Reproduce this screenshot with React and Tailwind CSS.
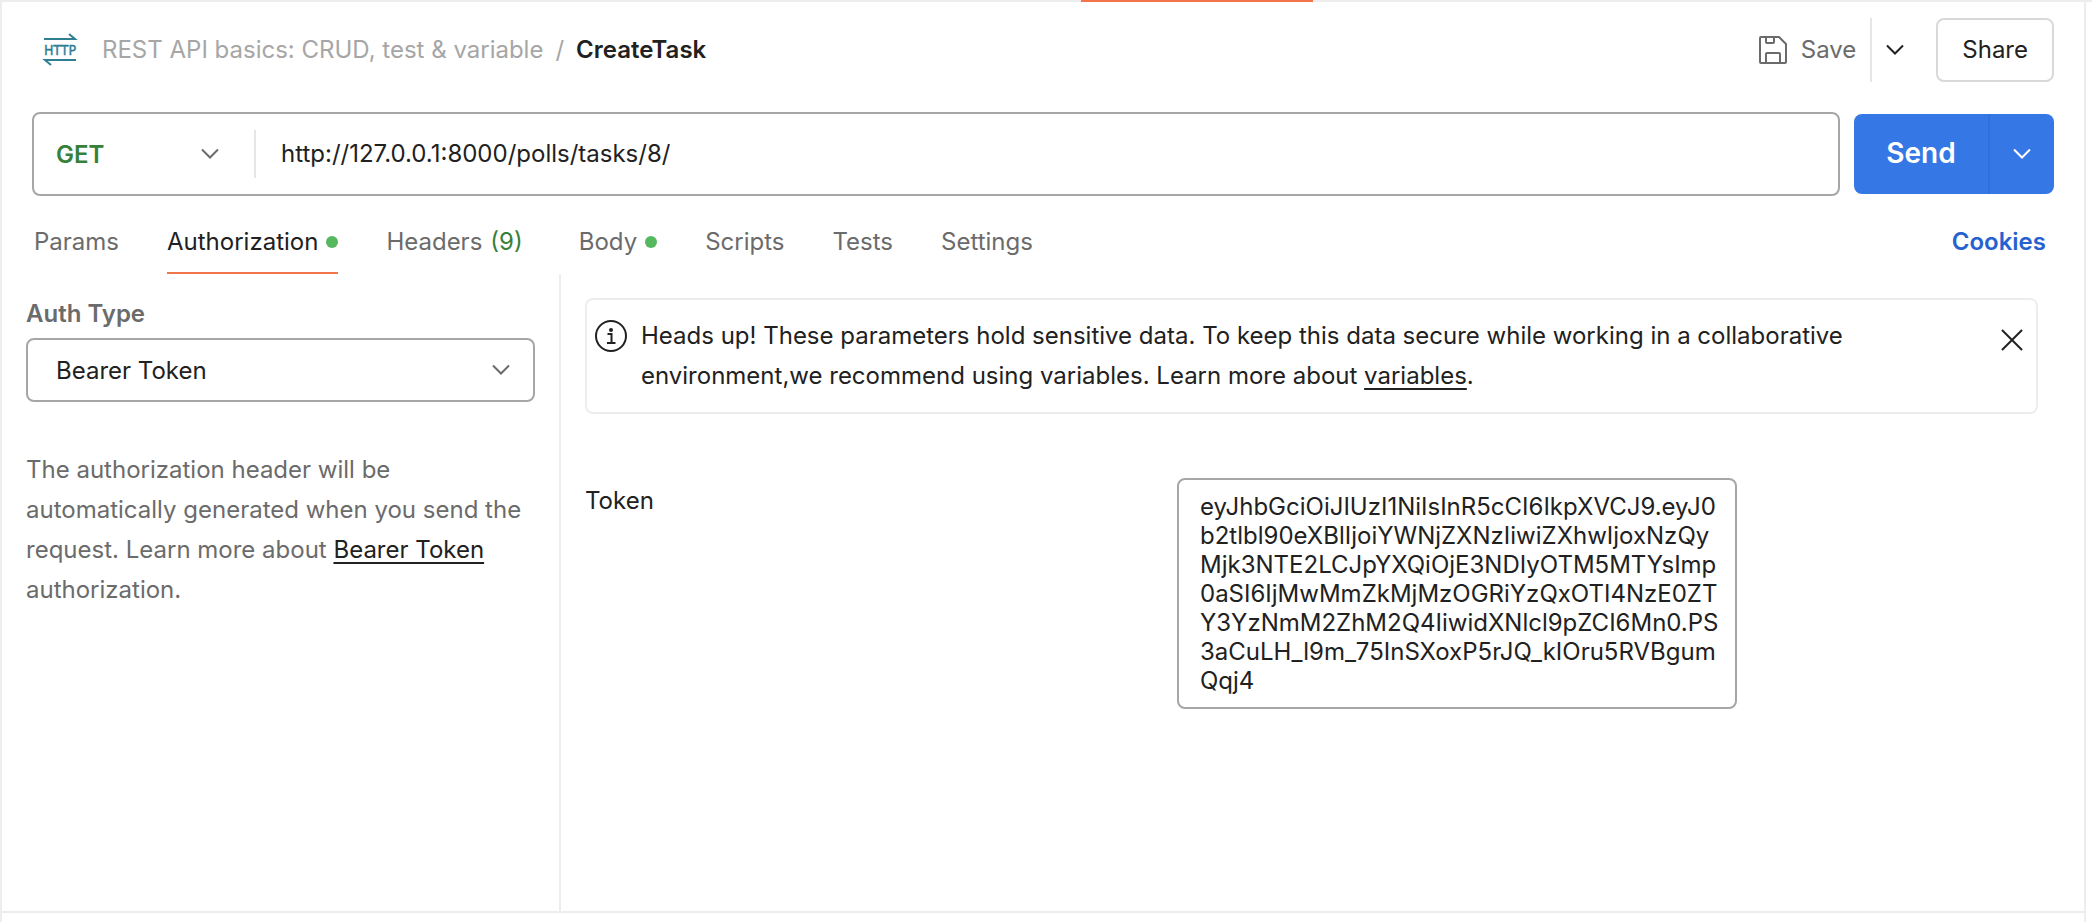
import { useState } from "react";

const TOKEN =
  "eyJhbGciOiJIUzI1NiIsInR5cCI6IkpXVCJ9.eyJ0b2tlbl90eXBlIjoiYWNjZXNzIiwiZXhwIjoxNzQyMjk3NTE2LCJpYXQiOjE3NDIyOTM5MTYsImp0aSI6IjMwMmZkMjMzOGRiYzQxOTI4NzE0ZTY3YzNmM2ZhM2Q4IiwidXNlcl9pZCI6Mn0.PS3aCuLH_l9m_75InSXoxP5rJQ_kIOru5RVBgumQqj4";

const TABS = [
  { label: "Params" },
  { label: "Authorization", dot: true, active: true },
  { label: "Headers", count: "(9)" },
  { label: "Body", dot: true },
  { label: "Scripts" },
  { label: "Tests" },
  { label: "Settings" },
];

function Chevron({ className }) {
  return (
    <svg className={className} width="18" height="12" viewBox="0 0 18 12" fill="none" stroke="currentColor" strokeWidth="2" aria-hidden="true">
      <path d="M1 1.5 9 9.5 17 1.5" />
    </svg>
  );
}

function HttpIcon() {
  return (
    <svg className="overflow-visible" width="34" height="32" viewBox="0 0 34 32" fill="none" stroke="#2f7f93" strokeWidth="2" aria-hidden="true">
      <path d="M1 5H32L26 0" />
      <path d="M33 26H2L8 31" />
      <text
        x="17"
        y="21"
        textAnchor="middle"
        fill="#2f7f93"
        stroke="#2f7f93"
        strokeWidth="0.4"
        className="font-['DejaVu_Sans_Condensed','Roboto',sans-serif] text-[14px] font-medium"
      >
        HTTP
      </text>
    </svg>
  );
}

function SaveIcon() {
  return (
    <svg width="28" height="28" viewBox="0 0 28 28" fill="none" stroke="currentColor" strokeWidth="2" strokeLinejoin="round" aria-hidden="true">
      <path d="M2 1H20L27 8V26a1 1 0 0 1-1 1H2a1 1 0 0 1-1-1V2a1 1 0 0 1 1-1Z" />
      <path d="M7 1V6a1 1 0 0 0 1 1H14a1 1 0 0 0 1-1V1" />
      <path d="M7 27V18a1 1 0 0 1 1-1H20a1 1 0 0 1 1 1V27" />
    </svg>
  );
}

function InfoIcon() {
  return (
    <svg className="shrink-0" width="32" height="32" viewBox="0 0 32 32" fill="none" stroke="currentColor" strokeWidth="2" aria-hidden="true">
      <circle cx="16" cy="16" r="15" />
      <path d="M12.5 14H16.5V23M12 23H20.5" />
      <circle cx="16" cy="10" r="2" fill="currentColor" stroke="none" />
    </svg>
  );
}

export default function App() {
  const [url, setUrl] = useState("http://127.0.0.1:8000/polls/tasks/8/");
  const [token, setToken] = useState(TOKEN);

  return (
    <div className="flex min-h-screen flex-col bg-white pr-1.5 font-['Inter','Liberation_Sans',sans-serif] text-2xl text-[#212121]">
      <div className="-mr-1.5 flex h-0.5 bg-[#ededed]">
        <div className="ml-[1081px] w-58 bg-[#f0754c]" />
      </div>

      <div className="flex grow flex-col border-x-2 border-[#ededed]">
        <header className="flex items-center justify-between pt-4 pr-[30px] pl-[41px]">
          <nav aria-label="Breadcrumb" className="flex items-center">
            <HttpIcon />
            <a href="#collection" className="ml-[25px] text-[#a6a6a6]">REST API basics: CRUD, test &amp; variable</a>
            <span className="mx-3 text-[#a6a6a6]">/</span>
            <h1 className="font-semibold">CreateTask</h1>
          </nav>
          <div className="flex items-center">
            <button type="button" className="flex items-center gap-3.5 pr-3.5 text-[#6b6b6b]">
              <SaveIcon />
              Save
            </button>
            <button type="button" aria-label="Save options" className="flex h-16 w-12 items-center justify-center border-l-2 border-[#e6e6e6]">
              <Chevron />
            </button>
            <button type="button" className="ml-[18px] h-16 rounded-lg border-2 border-[#d9d9d9] px-6">Share</button>
          </div>
        </header>

        <div className="flex items-center gap-3.5 pt-[30px] pr-[30px] pl-[30px]">
          <div className="flex h-21 grow items-center rounded-lg border-2 border-[#a6a6a6]">
            <div className="relative flex h-12 w-[222px] items-center border-r-2 border-[#e6e6e6] text-[#6b6b6b]">
              <select aria-label="Method" className="h-full w-full appearance-none bg-transparent pt-0.5 pl-[22px] font-semibold text-[#36803a] outline-none">
                <option>GET</option>
                <option>POST</option>
              </select>
              <Chevron className="pointer-events-none absolute right-[35px]" />
            </div>
            <input
              aria-label="Request URL"
              value={url}
              onChange={(e) => setUrl(e.target.value)}
              className="h-full grow rounded-lg bg-transparent px-[25px] pb-0.5 outline-none"
            />
          </div>
          <div className="flex h-20 w-50 overflow-hidden rounded-lg bg-[#3578e5] text-white">
            <button type="button" className="grow text-[28px] font-semibold">Send</button>
            <button type="button" aria-label="Send options" className="flex w-[66px] items-center justify-center border-l-2 border-[#3170d6]">
              <Chevron />
            </button>
          </div>
        </div>

        <div className="flex justify-between pt-4 pr-[38px] pl-8">
          <div role="tablist" className="flex gap-12">
            {TABS.map((tab) => (
              <button
                key={tab.label}
                type="button"
                role="tab"
                aria-selected={!!tab.active}
                className={
                  tab.active
                    ? "flex h-[62px] items-center gap-2 border-b-2 border-[#f0754c]"
                    : "flex h-[62px] items-center gap-2 border-b-2 border-transparent text-[#6b6b6b]"
                }
              >
                {tab.label}
                {tab.count && <span className="mr-2 text-[#36803a]">{tab.count}</span>}
                {tab.dot && <span className="size-3 rounded-full bg-[#55b75e]" />}
              </button>
            ))}
          </div>
          <a href="#cookies" className="flex h-15 items-center font-semibold text-[#2662cf]">Cookies</a>
        </div>

        <main className="flex grow">
          <section className="w-[559px] shrink-0 border-r-2 border-[#ededed] pt-5 pr-6 pl-6">
            <label htmlFor="auth-type" className="block h-11 pt-1 font-semibold text-[#6b6b6b]">Auth Type</label>
            <div className="relative flex items-center text-[#6b6b6b]">
              <select id="auth-type" className="h-16 w-full appearance-none rounded-lg border-2 border-[#a6a6a6] bg-white pt-0.5 pl-7 text-[#212121] outline-none">
                <option>Bearer Token</option>
                <option>Basic Auth</option>
              </select>
              <Chevron className="pointer-events-none absolute right-[25px]" />
            </div>
            <p className="mt-12 leading-10 text-[#6b6b6b]">
              The authorization header will be automatically generated when you send the request. Learn more about{" "}
              <a href="#bearer" className="text-[#212121] underline decoration-2 underline-offset-4">Bearer Token</a> authorization.
            </p>
          </section>

          <section className="grow pt-6 pr-[46px] pl-6">
            <div className="flex items-start rounded-lg border-2 border-[#ededed] py-4 pr-[13px] pl-2">
              <div className="pt-1">
                <InfoIcon />
              </div>
              <p className="ml-3.5 max-w-[1260px] leading-10">
                Heads up! These parameters hold sensitive data. To keep this data secure while working in a collaborative environment,we recommend using variables. Learn more about{" "}
                <a href="#variables" className="underline decoration-2 underline-offset-4">variables</a>.
              </p>
              <button type="button" aria-label="Dismiss" className="mt-[13px] ml-auto">
                <svg width="22" height="22" viewBox="0 0 22 22" fill="none" stroke="currentColor" strokeWidth="2" aria-hidden="true">
                  <path d="M1 1 21 21M21 1 1 21" />
                </svg>
              </button>
            </div>

            <div className="mt-16 flex items-start">
              <label htmlFor="token" className="w-[592px] pt-[7px]">Token</label>
              <textarea
                id="token"
                rows={7}
                spellCheck={false}
                value={token}
                onChange={(e) => setToken(e.target.value)}
                className="block w-140 resize-none overflow-hidden rounded-lg border-2 border-[#a6a6a6] py-3 pr-3 pl-[21px] leading-[29px] break-all outline-none"
              />
            </div>
          </section>
        </main>

        <footer className="h-[11px] border-t-2 border-[#ededed]" />
      </div>
    </div>
  );
}
